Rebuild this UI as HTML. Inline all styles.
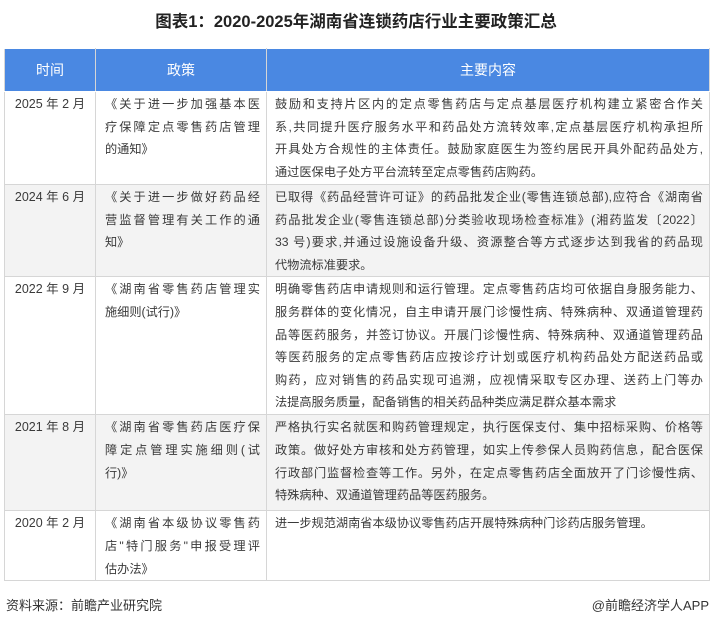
<!DOCTYPE html>
<html><head><meta charset="utf-8"><style>
body{margin:0;background:#fff;width:712px;height:624px;position:relative;font-family:"Liberation Sans","Noto Sans CJK SC",sans-serif;color:#3a3a3a;overflow:hidden}
.title{position:absolute;top:8px;left:0;width:712px;text-align:center;font-weight:bold;font-size:16.5px;color:#222}
table{position:absolute;left:4px;top:48px;width:705px;border-collapse:collapse;table-layout:fixed}
td,th{border:1px solid #d6d6d6;vertical-align:top;font-size:12.2px;line-height:22.6px;padding:1px 0 0 0;overflow:hidden}
th{background:#4a88e2;color:#fff;font-weight:normal;font-size:14px;height:41px;vertical-align:middle;border-color:#fff #d6d6d6}
tr.g td{background:#f3f3f3}
td.c1{text-align:center;white-space:nowrap;font-size:12.5px}
td.c2{padding-left:9px;padding-right:6px}
td.c3{padding-left:8px;padding-right:6px}
.j{display:block;text-align:justify;text-align-last:justify;white-space:nowrap}
.l{display:block;white-space:nowrap}
.foot{position:absolute;top:595px;font-size:13px;color:#333}
</style></head><body>
<div class="title">图表1：2020-2025年湖南省连锁药店行业主要政策汇总</div>
<table>
<colgroup><col style="width:91px"><col style="width:171px"><col style="width:443px"></colgroup>
<tr><th>时间</th><th>政策</th><th>主要内容</th></tr>
<tr style="height:93px"><td class="c1">2025 年 2 月</td><td class="c2"><span class="j">《关于进一步加强基本医</span><span class="j">疗保障定点零售药店管理</span><span class="l">的通知》</span></td><td class="c3"><span class="j">鼓励和支持片区内的定点零售药店与定点基层医疗机构建立紧密合作关</span><span class="j">系,共同提升医疗服务水平和药品处方流转效率,定点基层医疗机构承担所</span><span class="j">开具处方合规性的主体责任。鼓励家庭医生为签约居民开具外配药品处方,</span><span class="l">通过医保电子处方平台流转至定点零售药店购药。</span></td></tr>
<tr class="g" style="height:90px"><td class="c1">2024 年 6 月</td><td class="c2"><span class="j">《关于进一步做好药品经</span><span class="j">营监督管理有关工作的通</span><span class="l">知》</span></td><td class="c3"><span class="j">已取得《药品经营许可证》的药品批发企业(零售连锁总部),应符合《湖南省</span><span class="j">药品批发企业(零售连锁总部)分类验收现场检查标准》(湘药监发〔2022〕</span><span class="j">33 号)要求,并通过设施设备升级、资源整合等方式逐步达到我省的药品现</span><span class="l">代物流标准要求。</span></td></tr>
<tr style="height:138px"><td class="c1">2022 年 9 月</td><td class="c2"><span class="j">《湖南省零售药店管理实</span><span class="l">施细则(试行)》</span></td><td class="c3"><span class="j">明确零售药店申请规则和运行管理。定点零售药店均可依据自身服务能力、</span><span class="j">服务群体的变化情况，自主申请开展门诊慢性病、特殊病种、双通道管理药</span><span class="j">品等医药服务，并签订协议。开展门诊慢性病、特殊病种、双通道管理药品</span><span class="j">等医药服务的定点零售药店应按诊疗计划或医疗机构药品处方配送药品或</span><span class="j">购药，应对销售的药品实现可追溯，应视情采取专区办理、送药上门等办</span><span class="l">法提高服务质量，配备销售的相关药品种类应满足群众基本需求</span></td></tr>
<tr class="g" style="height:96px"><td class="c1">2021 年 8 月</td><td class="c2"><span class="j">《湖南省零售药店医疗保</span><span class="j">障定点管理实施细则(试</span><span class="l">行)》</span></td><td class="c3"><span class="j">严格执行实名就医和购药管理规定，执行医保支付、集中招标采购、价格等</span><span class="j">政策。做好处方审核和处方药管理，如实上传参保人员购药信息，配合医保</span><span class="j">行政部门监督检查等工作。另外，在定点零售药店全面放开了门诊慢性病、</span><span class="l">特殊病种、双通道管理药品等医药服务。</span></td></tr>
<tr style="height:69px"><td class="c1">2020 年 2 月</td><td class="c2"><span class="j">《湖南省本级协议零售药</span><span class="j">店"特门服务"申报受理评</span><span class="l">估办法》</span></td><td class="c3"><span class="l">进一步规范湖南省本级协议零售药店开展特殊病种门诊药店服务管理。</span></td></tr>
</table>
<div class="foot" style="left:6px">资料来源：前瞻产业研究院</div>
<div class="foot" style="right:3px">@前瞻经济学人APP</div>
</body></html>
